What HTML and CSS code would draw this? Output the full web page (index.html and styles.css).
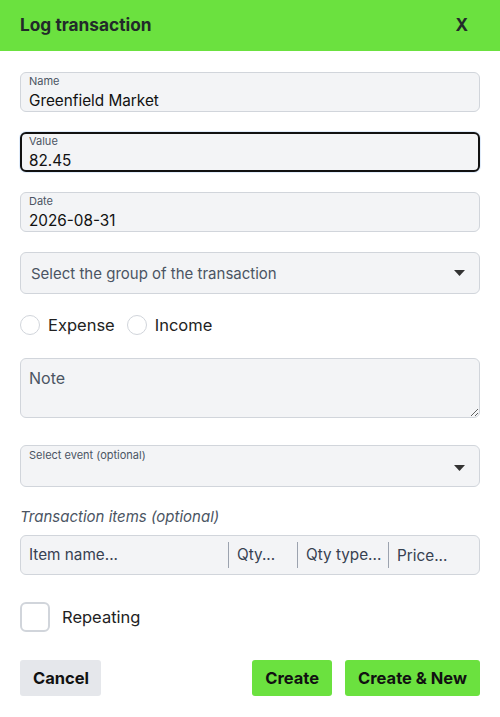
FILE: index.html
```html
<!DOCTYPE html>
<html lang="en">
<head>
<meta charset="UTF-8" />
<title>Log transaction</title>
<link rel="stylesheet" href="styles.css">
</head>
<body>
<div class="dialog">
  <div class="header">
    <h2>Log transaction</h2>
    <span class="close">X</span>
  </div>
  <form class="form">
    <label class="field">
      <span class="field-label">Name</span>
      <input type="text" value="Greenfield Market" />
    </label>
    <label class="field focused">
      <span class="field-label">Value</span>
      <input type="text" value="82.45" />
    </label>
    <label class="field">
      <span class="field-label">Date</span>
      <input type="text" value="2026-08-31" />
    </label>
    <div class="select">
      <span class="placeholder">Select the group of the transaction</span>
      <svg class="arrow" width="11" height="6" viewBox="0 0 11 6"><path d="M0 0h11L5.5 6z" fill="#333"/></svg>
    </div>
    <div class="radios">
      <label class="radio"><span class="circle"></span>Expense</label>
      <label class="radio"><span class="circle"></span>Income</label>
    </div>
    <textarea class="note" placeholder="Note"></textarea>
    <div class="select event">
      <span class="field-label">Select event (optional)</span>
      <svg class="arrow" width="11" height="6" viewBox="0 0 11 6"><path d="M0 0h11L5.5 6z" fill="#333"/></svg>
    </div>
    <div class="items">
      <p class="items-title">Transaction items (optional)</p>
      <div class="items-row">
        <span class="cell name">Item name...</span>
        <span class="cell qty">Qty...</span>
        <span class="cell qtype">Qty type...</span>
        <span class="cell price">Price...</span>
      </div>
    </div>
    <label class="check"><span class="box"></span>Repeating</label>
    <div class="actions">
      <button type="button" class="btn cancel">Cancel</button>
      <div class="right">
        <button type="button" class="btn green">Create</button>
        <button type="button" class="btn green">Create &amp; New</button>
      </div>
    </div>
  </form>
</div>
</body>
</html>
```

FILE: styles.css
```css
body { margin: 0; font-family: Inter, "Open Sans", sans-serif; color: #111; background: white; }

.dialog { width: 500px; }

.header { background: #6be13f; height: 51px; display: flex; align-items: center; justify-content: space-between; padding: 0 20px 2px; box-sizing: border-box; }
.header h2 { margin: 0; font-size: 17.3px; font-weight: 700; color: #222a2a; }
.close { font-size: 17px; font-weight: 700; color: #222a2a; margin-right: 12px; }

.form { padding: 21px 20px; display: flex; flex-direction: column; }

.field { display: flex; flex-direction: column; height: 40px; box-sizing: border-box; background: #f3f4f6; border: 1px solid #d1d5db; border-radius: 6px; padding: 2px 8px 0; margin-bottom: 20px; }
.field.focused { border: 2px solid #111; padding: 1px 7px 0; box-shadow: 0 0 0 1px #e0ecfb; }
.field-label { font-size: 11px; color: #4b5563; line-height: 13px; }
.field input { border: none; background: transparent; font: inherit; font-size: 15.3px; color: #111; padding: 0; margin-top: 3px; outline: none; }

.select { height: 42px; box-sizing: border-box; background: #f3f4f6; border: 1px solid #d1d5db; border-radius: 6px; display: flex; align-items: center; justify-content: space-between; padding: 0 14px 0 10px; }
.placeholder { font-size: 15px; color: #4b5563; }
.select.event { align-items: flex-start; padding: 3px 14px 0 8px; margin-top: 27px; }
.select.event .arrow { margin-top: 16px; }

.radios { display: flex; align-items: center; gap: 12px; height: 20px; margin: 21px 0 23px; }
.radio { display: flex; align-items: center; font-size: 16.5px; color: #222; }
.circle { width: 18px; height: 18px; border: 1px solid #d1d5db; border-radius: 50%; margin-right: 8px; background: white; }

.note { height: 60px; box-sizing: border-box; background: #f3f4f6; border: 1px solid #d1d5db; border-radius: 6px; padding: 9px 8px; font: inherit; font-size: 16px; resize: vertical; }
.note::placeholder { color: #4b5563; }

.items { margin-top: 20px; }
.items-title { margin: 0 0 9px; font-size: 15px; font-style: italic; color: #4b5563; }
.items-row { display: flex; align-items: center; height: 40px; box-sizing: border-box; background: #f3f4f6; border: 1px solid #d1d5db; border-radius: 6px; padding: 0 0 0 8px; }
.cell { font-size: 15.3px; color: #374151; }
.cell.name { width: 199px; border-right: 1px solid #9ca3af; line-height: 26px; }
.cell.qty { width: 60px; padding-left: 8px; border-right: 1px solid #9ca3af; line-height: 26px; }
.cell.qtype { width: 82px; padding-left: 8px; border-right: 1px solid #9ca3af; line-height: 26px; }
.cell.price { padding-left: 8px; }

.check { display: flex; align-items: center; font-size: 16.5px; color: #222; margin-top: 27px; }
.box { width: 26px; height: 26px; border: 2px solid #d1d5db; border-radius: 6px; margin-right: 12px; }

.actions { display: flex; justify-content: space-between; margin-top: 28px; }
.right { display: flex; gap: 13px; }
.btn { height: 36px; border: none; border-radius: 3px; font: inherit; font-size: 16.5px; font-weight: 700; color: #111; padding: 0 13px; }
.cancel { background: #e5e7eb; width: 81px; }
.green { background: #6be13f; }
```
